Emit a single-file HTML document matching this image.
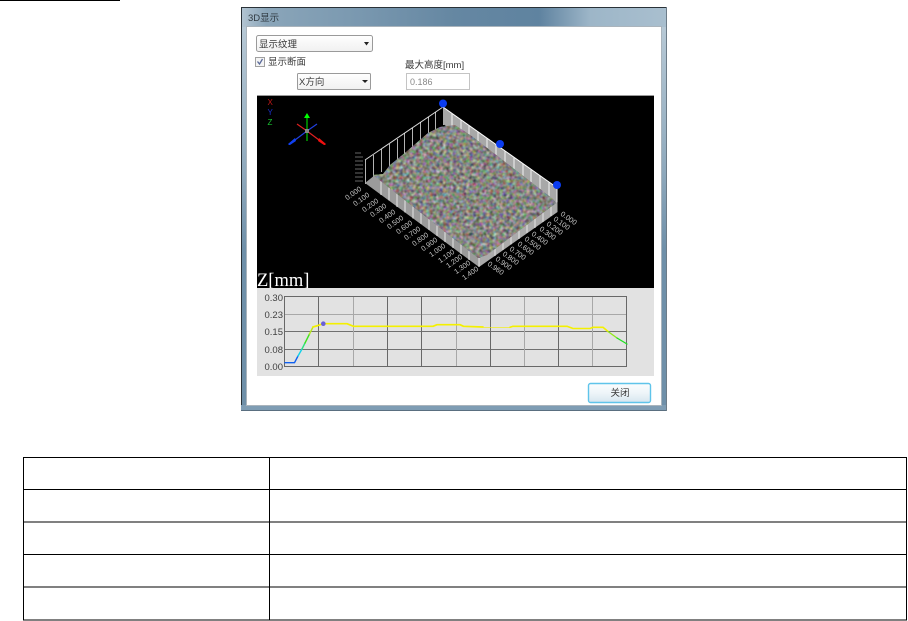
<!DOCTYPE html>
<html lang="zh"><head><meta charset="utf-8"><title>3D显示</title>
<style>
html,body{margin:0;padding:0;background:#fff}
body{width:908px;height:621px;overflow:hidden;position:relative}
svg{position:absolute;left:0;top:0;display:block}
text{font-family:"Liberation Sans","Noto Sans CJK SC",sans-serif}
.t{font-size:9.5px;fill:#3a3a3a}
.a{font-size:7.2px;fill:#c8c8c8}
</style></head><body>
<svg width="908" height="621" viewBox="0 0 908 621" xmlns="http://www.w3.org/2000/svg">
<defs>
<linearGradient id="title" x1="0" x2="1" y1="0" y2="0">
<stop offset="0" stop-color="#b3c5d2"/><stop offset=".06" stop-color="#8aa5b9"/><stop offset=".25" stop-color="#7c9ab1"/><stop offset=".5" stop-color="#6587a2"/><stop offset=".7" stop-color="#5f83a0"/><stop offset=".82" stop-color="#9db6c8"/><stop offset="1" stop-color="#a9bfcf"/>
</linearGradient>
<linearGradient id="side" x1="0" x2="0" y1="0" y2="1">
<stop offset="0" stop-color="#bccdd9"/><stop offset=".4" stop-color="#90aabd"/><stop offset=".6" stop-color="#6f90a9"/><stop offset="1" stop-color="#6f90a9"/>
</linearGradient>
<linearGradient id="btn" x1="0" x2="0" y1="0" y2="1">
<stop offset="0" stop-color="#fbfdfe"/><stop offset=".5" stop-color="#eef5f9"/><stop offset="1" stop-color="#d6e6ef"/>
</linearGradient>
<linearGradient id="cb" x1="0" x2="0" y1="0" y2="1">
<stop offset="0" stop-color="#fff"/><stop offset="1" stop-color="#f0f0f0"/>
</linearGradient>
<filter id="noise" x="0" y="0" width="1" height="1" color-interpolation-filters="sRGB">
<feTurbulence type="fractalNoise" baseFrequency="0.3" numOctaves="2" seed="7" result="n"/>
<feColorMatrix in="n" type="matrix" values=".85 .2 .2 0 -.1  .2 .85 .2 0 -.1  .18 .18 .85 0 -.1  0 0 0 0 1" result="c"/>
<feGaussianBlur in="c" stdDeviation=".5" result="b"/>
<feComposite in="b" in2="SourceAlpha" operator="in"/>
</filter>
</defs>

<rect x="0" y="0" width="120" height="1" fill="#000"/>

<!-- window -->
<rect x="241" y="7" width="426" height="404" fill="url(#side)"/>
<rect x="241" y="7" width="426" height="20" fill="url(#title)"/>
<rect x="241" y="7" width="426" height="1" fill="#2a3238"/>
<rect x="241" y="7" width="1" height="404" fill="#2a3238"/>
<rect x="241" y="405" width="426" height="6" fill="#7f9db4"/>
<rect x="241" y="410" width="426" height="1" fill="#5a6f80"/>
<rect x="666" y="7" width="1" height="404" fill="#6d7c88"/>
<rect x="246" y="26" width="416" height="380" fill="#aab4bc"/>
<rect x="247" y="27" width="414" height="378" fill="#fff"/>
<text x="248" y="21" font-size="9.5" fill="#303a42">3D显示</text>

<!-- combos -->
<rect x="256.500" y="35.500" width="116" height="16" rx="2" fill="url(#cb)" stroke="#9a9a9a"/>
<text x="259" y="47.500" class="t">显示纹理</text>
<path d="M364 42h5l-2.500 3.500z" fill="#222"/>
<rect x="255.500" y="57.500" width="9" height="9" fill="#f4f4f4" stroke="#a0a0a0"/>
<path d="M257.500 61.500l2 2.500 3-5" fill="none" stroke="#5a6a9a" stroke-width="1.300"/>
<text x="268" y="65" class="t">显示断面</text>
<text x="405" y="68" class="t">最大高度[mm]</text>
<rect x="297.500" y="73.500" width="73" height="16" rx="1" fill="url(#cb)" stroke="#9a9a9a"/>
<text x="299" y="85" class="t">X方向</text>
<path d="M362 80h6l-3 3z" fill="#222"/>
<rect x="406.500" y="73.500" width="63" height="16" fill="#fff" stroke="#c4c4c4"/>
<text x="410" y="85" font-size="9" fill="#888">0.186</text>

<!-- black 3D view -->
<rect x="257" y="95" width="397" height="1" fill="#9a9a9a"/>
<rect x="257" y="96" width="397" height="192" fill="#000"/>

<text x="267.500" y="105" font-size="8" fill="#c01818">X</text>
<text x="267.500" y="115" font-size="8" fill="#1a30c8">Y</text>
<text x="267.500" y="125" font-size="8" fill="#18c030">Z</text>

<!-- gizmo -->
<g stroke-width="1.200" fill="none">
<path d="M307 131V114" stroke="#0c0"/><path d="M307 131v10" stroke="#0c0"/>
<path d="M307 131L323 143M307 131L297 124" stroke="#e02020"/>
<path d="M307 131L291 143M307 131L317 124" stroke="#2040e0"/>
</g>
<path d="M304 118l3-5 3 5z" fill="#0f0"/>
<path d="M319 138l7 6-1 1-1 0-6-4z" fill="#f01010"/>
<path d="M295 138l-7 6 1 1 1 0 6-4z" fill="#1040f0"/>
<rect x="305" y="129" width="4" height="4" fill="#888"/>

<!-- back-left grid wall -->
<g stroke="#fff" stroke-width="1" fill="none">
<path d="M365 160L443 107" stroke-opacity=".85"/>
<path d="M365.500 160V184M373.500 155V178M381.500 149V172M389.500 144V166M397.500 139V160M404.500 133V154M412.500 128V148M420.500 122V142M428.500 117V136M435.500 112V130M443.500 107V125" stroke-opacity=".7"/>
</g>
<!-- z ticks -->
<g fill="none" stroke="#ccc" stroke-dasharray="1 1">
<path d="M355.500 153h6M355.500 157h8M355.500 161h7M355.500 165h8M355.500 169h7M355.500 173h8M355.500 177h7M355.500 181h8"/>
</g>

<!-- back-right wall -->
<path d="M443 107L557.500 188V205L443 124z" fill="#a8a8a8"/>
<path d="M443 107L557.500 188" stroke="#fff" fill="none"/>
<path d="M452 113.500v18M461 120v18M469 126v18M478 132v18M487 138.500v18M496 145v18M505 151v18M514 157.500v18M523 164v18M531 170v18M540 176v18M549 182v18M557 188v18" stroke="#f2f2f2" fill="none" stroke-width="1"/>

<!-- front walls -->
<path d="M365 183L375 175L479 258V267z" fill="#9b9b9b"/>
<path d="M479 267L557.500 212V202L487 254L479 258z" fill="#ababab"/>
<path d="M381 181v14M389 187.500v13M397 194v13M405 200v12.500M413 206.500v12M421 213v11M429 219v11M437 225.500v10.500M445 232v10M453 238v10M461 244.500v9.500M469 251v9M479 258v9" stroke="#e4e4e4" fill="none"/>
<path d="M495 249v7M503 242.500v7.500M511 236.500v8M519 230v9M527 224v9M535 218v10M543 211.500v10.500M551 205v11" stroke="#e4e4e4" fill="none"/>

<!-- textured surface -->
<path d="M373 175L383 174L390 165L406 152L428 133L440 127L455 125L473 137L553 199L556 203L487 255L478 258z" fill="#8a8a80"/>
<path d="M373 175L383 174L390 165L406 152L428 133L440 127L455 125L473 137L553 199L556 203L487 255L478 258z" fill="#fff" filter="url(#noise)"/>

<!-- blue handles -->
<circle cx="443" cy="103.500" r="4" fill="#0a3cf0"/>
<circle cx="500" cy="144" r="4" fill="#0a3cf0"/>
<circle cx="557" cy="185" r="4" fill="#0a3cf0"/>

<!-- left axis labels -->
<g text-anchor="end">
<text transform="translate(362 190) rotate(-35)" class="a">0.000</text>
<text transform="translate(370 196) rotate(-35)" class="a">0.100</text>
<text transform="translate(379 202) rotate(-35)" class="a">0.200</text>
<text transform="translate(387 207) rotate(-35)" class="a">0.300</text>
<text transform="translate(396 213) rotate(-35)" class="a">0.400</text>
<text transform="translate(404 219) rotate(-35)" class="a">0.500</text>
<text transform="translate(413 224) rotate(-35)" class="a">0.600</text>
<text transform="translate(421 230) rotate(-35)" class="a">0.700</text>
<text transform="translate(429 236) rotate(-35)" class="a">0.800</text>
<text transform="translate(438 241) rotate(-35)" class="a">0.900</text>
<text transform="translate(446 247) rotate(-35)" class="a">1.000</text>
<text transform="translate(455 253) rotate(-35)" class="a">1.100</text>
<text transform="translate(463 258) rotate(-35)" class="a">1.200</text>
<text transform="translate(471 264) rotate(-35)" class="a">1.300</text>
<text transform="translate(479 270) rotate(-35)" class="a">1.400</text>
</g>
<!-- right axis labels -->
<g>
<text transform="translate(560 215) rotate(35)" class="a">0.000</text>
<text transform="translate(553 220) rotate(35)" class="a">0.100</text>
<text transform="translate(546 225) rotate(35)" class="a">0.200</text>
<text transform="translate(539 230) rotate(35)" class="a">0.300</text>
<text transform="translate(531 235) rotate(35)" class="a">0.400</text>
<text transform="translate(524 240) rotate(35)" class="a">0.500</text>
<text transform="translate(517 245) rotate(35)" class="a">0.600</text>
<text transform="translate(509 250) rotate(35)" class="a">0.700</text>
<text transform="translate(502 255) rotate(35)" class="a">0.800</text>
<text transform="translate(495 260) rotate(35)" class="a">0.900</text>
<text transform="translate(487 265) rotate(35)" class="a">0.960</text>
</g>

<!-- Z[mm] clipped by view -->
<svg x="257" y="268" width="60" height="20" viewBox="0 0 60 20" style="position:static">
<text x="0" y="18" style="font-family:'Liberation Serif',serif" font-size="18.500" fill="#fff">Z[mm]</text>
</svg>

<!-- chart panel -->
<rect x="257" y="288" width="397" height="88" fill="#e2e2e2"/>
<g fill="none" stroke-width="1">
<path d="M284.500 314.500H626.500" stroke="#a8a8a8"/>
<path d="M284.500 331.500H626.500M284.500 349.500H626.500" stroke="#707070"/>
<path d="M353.500 297V367M456.500 297V367M524.500 297V367M592.500 297V367" stroke="#a8a8a8"/>
<path d="M318.500 297V367M387.500 297V367M421.500 297V367M490.500 297V367M558.500 297V367" stroke="#686868"/>
<rect x="284.500" y="296.500" width="342" height="70" stroke="#686868"/>
</g>
<g font-size="9.500" fill="#404040" text-anchor="end">
<text x="283" y="301">0.30</text>
<text x="283" y="318">0.23</text>
<text x="283" y="335">0.15</text>
<text x="283" y="353">0.08</text>
<text x="283" y="370">0.00</text>
</g>
<!-- profile -->
<g fill="none" stroke-linejoin="round" stroke-linecap="round">
<path d="M285 362.700H294.500L298 356" stroke="#1060f0" stroke-width="1.400"/>
<path d="M298 356L302 349" stroke="#10d0e8" stroke-width="1.400"/>
<path d="M302 349L305 343" stroke="#30e080" stroke-width="1.400"/>
<path d="M305 343L309.500 334" stroke="#40e020" stroke-width="1.400"/>
<path d="M309.500 334L313 327" stroke="#b8e820" stroke-width="1.400"/>
<path d="M313 327L318 325.500L323 323.700H347L353.500 326.300H433L437 324.700H460L463.500 326.300L483 327" stroke="#f4f000" stroke-width="1.700"/>
<path d="M483 327.300H510" stroke="#f4f000" stroke-width=".7"/>
<path d="M510 327.300L513 326.300H567L573 328.500H590L593 327.300H603L608 331.500" stroke="#f4f000" stroke-width="1.600"/>
<path d="M608 331.500L617 338" stroke="#90e818" stroke-width="1.300"/>
<path d="M617 338L627 344" stroke="#20e020" stroke-width="1.300"/>
</g>
<circle cx="323.300" cy="323.700" r="2.300" fill="#6a5fd8"/>

<!-- close button -->
<rect x="588.500" y="383.500" width="62" height="19" rx="2" fill="url(#btn)" stroke="#5fc4ea" stroke-width="1.400"/>
<text x="620" y="396" text-anchor="middle" class="t">关闭</text>

<!-- table -->
<g fill="none" stroke="#000" stroke-width="1">
<rect x="23.500" y="457.500" width="883" height="162.500"/>
<path d="M23.500 489.500H907M23.500 522H907M23.500 554.500H907M23.500 587H907M269.500 457.500V620"/>
</g>
</svg>
</body></html>
